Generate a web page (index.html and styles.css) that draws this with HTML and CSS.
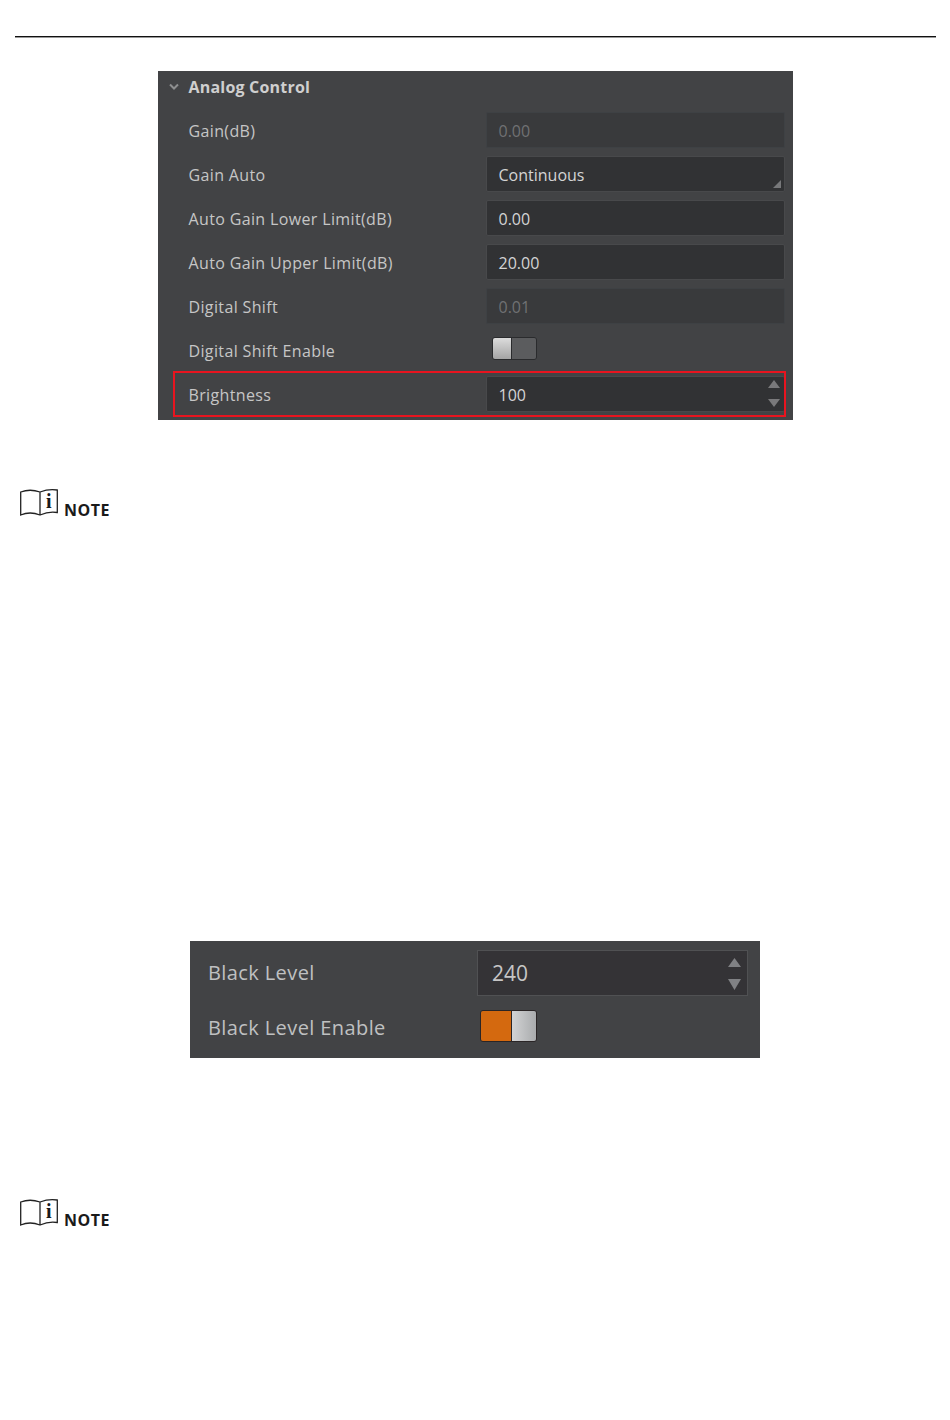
FILE: index.html
```html
<!DOCTYPE html>
<html lang="en">
<head>
  <meta charset="UTF-8" />
  <meta name="viewport" content="width=device-width, initial-scale=1.0"/>
  <title>Analog Control</title>
  <link rel="stylesheet" href="styles.css">
</head>
<body>
  <div class="page">
    <hr class="top-rule">

    <div class="panel analog-panel">
      <div class="panel-title">
        <svg class="chevron" width="10" height="8" viewBox="0 0 10 8"><path d="M1 1.5 L5 5.5 L9 1.5" fill="none" stroke="#8e8f90" stroke-width="2"/></svg>
        <span>Analog Control</span>
      </div>
      <div class="row">
        <span class="label">Gain(dB)</span>
        <div class="field disabled">0.00</div>
      </div>
      <div class="row">
        <span class="label">Gain Auto</span>
        <div class="field">Continuous<span class="corner"></span></div>
      </div>
      <div class="row">
        <span class="label">Auto Gain Lower Limit(dB)</span>
        <div class="field">0.00</div>
      </div>
      <div class="row">
        <span class="label">Auto Gain Upper Limit(dB)</span>
        <div class="field">20.00</div>
      </div>
      <div class="row">
        <span class="label">Digital Shift</span>
        <div class="field disabled">0.01</div>
      </div>
      <div class="row">
        <span class="label">Digital Shift Enable</span>
        <div class="switch"><span class="knob"></span><span class="track"></span></div>
      </div>
      <div class="row highlighted">
        <span class="label">Brightness</span>
        <div class="field">100
          <svg class="spinner" width="12" height="27" viewBox="0 0 12 27"><path d="M6 0 L12 8 L0 8 Z M0 19 L12 19 L6 27 Z" fill="#79797b"/></svg>
        </div>
      </div>
    </div>

    <div class="note">
      <svg class="note-icon" width="38" height="30" viewBox="0 0 38 30">
        <path d="M.7 4 Q10 .5 20 4 Q29 .5 37.3 2 V24.5 Q29 23 20 27 Q10 23 .7 27 Z M20 4 V27" fill="none" stroke="#222" stroke-width="1.3"/>
        <text x="26" y="20" class="note-i">i</text>
      </svg>
      <span class="note-text">NOTE</span>
    </div>

    <div class="panel black-panel">
      <div class="black-row">
        <span class="black-label">Black Level</span>
        <div class="black-field">240
          <svg class="black-spinner" width="13" height="32" viewBox="0 0 13 32"><path d="M6.5 0 L13 9 L0 9 Z M0 21 L13 21 L6.5 32 Z" fill="#808184"/></svg>
        </div>
      </div>
      <div class="black-row">
        <span class="black-label">Black Level Enable</span>
        <div class="black-switch"><span class="black-track"></span><span class="black-knob"></span></div>
      </div>
    </div>

    <div class="note second">
      <svg class="note-icon" width="38" height="30" viewBox="0 0 38 30">
        <path d="M.7 4 Q10 .5 20 4 Q29 .5 37.3 2 V24.5 Q29 23 20 27 Q10 23 .7 27 Z M20 4 V27" fill="none" stroke="#222" stroke-width="1.3"/>
        <text x="26" y="20" class="note-i">i</text>
      </svg>
      <span class="note-text">NOTE</span>
    </div>
  </div>
</body>
</html>
```

FILE: styles.css
```css
:root {
  --panel-bg: #424345;
  --field-bg: #313234;
  --field-border: #48494b;
  --text-color: #c6c6c6;
}

html, body {
  background: #fff;
}

body {
  margin: 0;
  font-family: 'Open Sans', 'Noto Sans', sans-serif;
}

.page {
  padding-top: 36px;
  height: 1384px;
  overflow: hidden;
}

.top-rule {
  margin: 0 14px 0 15px;
  border: none;
  height: 2px;
  background: linear-gradient(#111 60%, #999 60%);
}

.panel {
  background: var(--panel-bg);
  margin-left: auto;
  margin-right: auto;
}

/* Analog Control screenshot */
.analog-panel {
  width: 635px;
  margin-top: 33px;
  padding-bottom: 8px;
}

.panel-title {
  display: flex;
  align-items: center;
  height: 32px;
  margin-bottom: 9px;
  padding-left: 11px;
  gap: 10px;
  font-size: 16px;
  font-weight: 700;
  letter-spacing: 0.2px;
  color: #cfcfcf;
}

.row {
  position: relative;
  display: flex;
  align-items: center;
  height: 36px;
  margin-bottom: 8px;
  margin-right: 8px;
  padding-left: 31px;
}

.row:last-child {
  margin-bottom: 0;
}

.label {
  width: 297px;
  flex: none;
  padding-top: 2px;
  font-size: 16px;
  letter-spacing: 0.36px;
  color: var(--text-color);
}

.field {
  position: relative;
  flex: 1;
  display: flex;
  align-items: center;
  height: 36px;
  box-sizing: border-box;
  padding: 2px 0 0 12px;
  background: var(--field-bg);
  border: 1px solid var(--field-border);
  border-radius: 2px;
  font-size: 16px;
  color: #d4d4d4;
}

.field.disabled {
  background: #393a3c;
  border-color: #3e4144;
  color: #707173;
}

.corner {
  position: absolute;
  right: 3px;
  bottom: 3px;
  width: 0;
  height: 0;
  border-left: 8px solid transparent;
  border-bottom: 8px solid #77787a;
}

.spinner {
  position: absolute;
  right: 4px;
  top: 3px;
}

.switch {
  display: flex;
  width: 45px;
  height: 23px;
  margin: -3px 0 0 6px;
  box-sizing: border-box;
  border-radius: 3px;
  overflow: hidden;
  border: 1px solid #2a2b2d;
}

.knob {
  width: 18px;
  background: linear-gradient(#dcdcdc, #a4a4a4);
  border-right: 1px solid #2a2b2d;
}

.track {
  flex: 1;
  background: #5b5c5e;
}

.highlighted::after {
  content: "";
  position: absolute;
  left: 15px;
  right: -1px;
  top: -5px;
  bottom: -5px;
  border: 2px solid #e8141f;
  pointer-events: none;
}

/* NOTE heading */
.note {
  display: flex;
  align-items: flex-end;
  gap: 6px;
  margin-top: 68px;
  padding-left: 20px;
}

.note.second {
  margin-top: 140px;
}

.note-i {
  font-family: 'Liberation Serif', serif;
  font-weight: 700;
  font-size: 20px;
  fill: #1a1a1a;
}

.note-text {
  font-size: 16px;
  font-weight: 700;
  line-height: 16px;
  letter-spacing: 0.5px;
  color: #1a1a1a;
}

/* Black Level screenshot */
.black-panel {
  width: 570px;
  height: 117px;
  margin-top: 423px;
  padding: 9px 12px 0 18px;
  box-sizing: border-box;
}

.black-row {
  display: flex;
  align-items: center;
  height: 46px;
  margin-bottom: 9px;
}

.black-label {
  width: 269px;
  flex: none;
  padding-bottom: 2px;
  font-size: 20px;
  letter-spacing: 0.4px;
  color: #bfc0c1;
}

.black-field {
  position: relative;
  flex: 1;
  display: flex;
  align-items: center;
  height: 46px;
  box-sizing: border-box;
  padding-left: 14px;
  background: #343336;
  border: 1px solid #505153;
  font-size: 21px;
  color: #c6c6c6;
}

.black-spinner {
  position: absolute;
  right: 6px;
  top: 7px;
}

.black-switch {
  display: flex;
  width: 57px;
  height: 32px;
  margin-left: 3px;
  margin-top: -4px;
  box-sizing: border-box;
  border: 1px solid #2a2526;
  border-radius: 3px;
  overflow: hidden;
}

.black-track {
  flex: 1;
  background: #d4690f;
}

.black-knob {
  width: 24px;
  background: linear-gradient(90deg, #d2d3d4, #a9abad);
  border-left: 1px solid #2a2526;
}
```
